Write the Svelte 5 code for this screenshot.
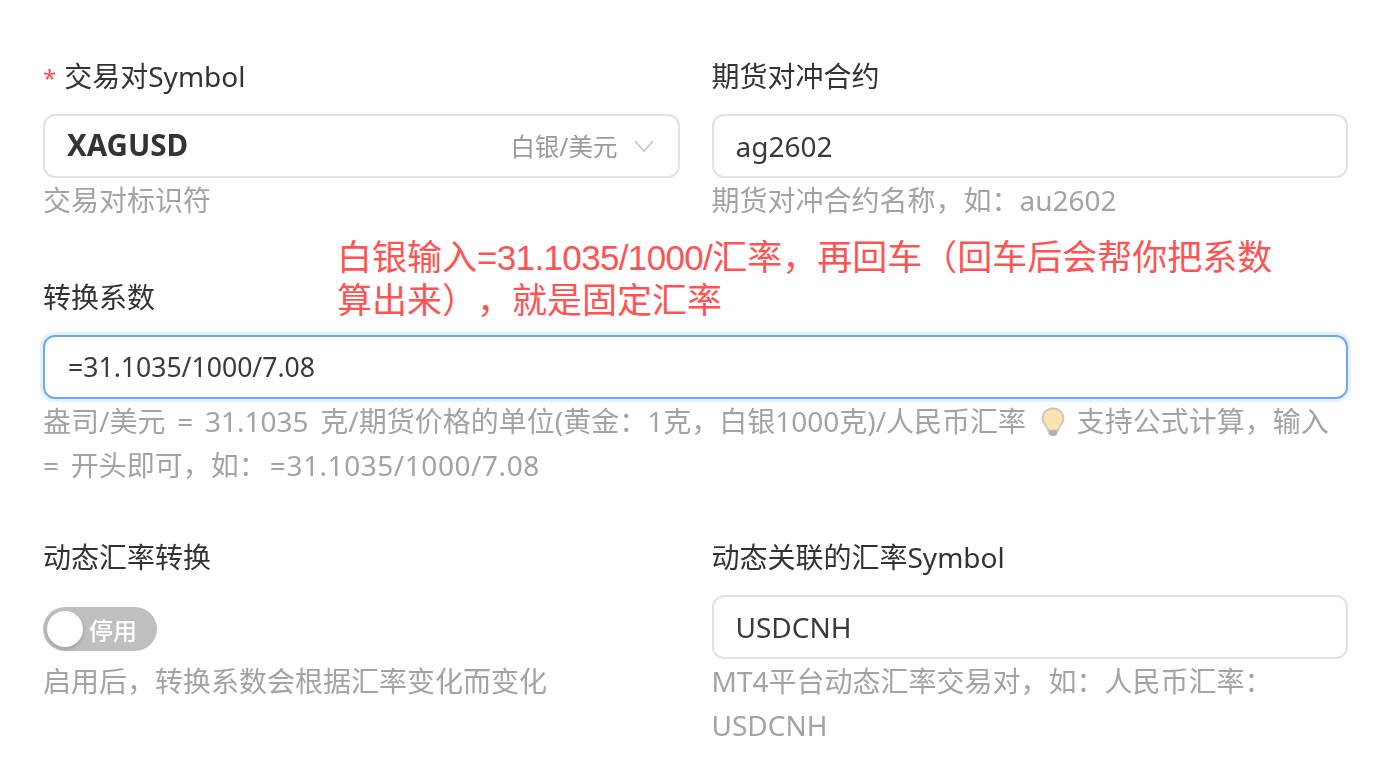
<script lang="ts">
  const formulaHelpA = "盎司/美元 = 31.1035 克/期货价格的单位(黄金：1克，白银1000克)/人民币汇率";
  const formulaHelpB = "支持公式计算，输入";
  const formulaHelpC = "= 开头即可，如：";
  const formulaExample = "=31.1035/1000/7.08";
</script>

<main>
  <div class="form">
    <section class="row first">
      <div class="field">
        <div class="label"><span class="req">*</span>交易对Symbol</div>
        <div class="control select">
          <b>XAGUSD</b>
          <span class="sub">白银/美元</span>
          <svg class="arrow" viewBox="0 0 20 12" width="20" height="12">
            <path d="M1 1l9 10 9-10" fill="none" stroke="#c4c4c4" stroke-width="1.6" />
          </svg>
        </div>
        <div class="help">交易对标识符</div>
      </div>
      <div class="field">
        <div class="label">期货对冲合约</div>
        <input class="control" value="ag2602" readonly />
        <div class="help">期货对冲合约名称，如：au2602</div>
      </div>
    </section>

    <section class="row second">
      <div class="field">
        <div class="label">转换系数</div>
        <input class="control focused" value="=31.1035/1000/7.08" readonly />
        <div class="help formula">
          {formulaHelpA}
          <svg class="bulb" viewBox="0 0 24 30" width="24" height="30">
            <path d="M12 1.500C6 1.500 1.500 6 1.500 11.500c0 3.800 2.300 5.800 3.900 8 1 1.300 1.500 2.500 1.700 3.800h9.800c.2-1.300.7-2.500 1.700-3.800 1.600-2.200 3.900-4.200 3.900-8C22.500 6 18 1.500 12 1.500z" fill="#ffe2ae" stroke="#c9c5bc" stroke-width="1.800" />
            <path d="M7.500 23.500h9v2.400c0 1.800-1.800 3-4.500 3s-4.500-1.200-4.500-3z" fill="#b0b0b0" />
          </svg>
          {formulaHelpB}<br />{formulaHelpC}<span class="example">{formulaExample}</span>
        </div>
      </div>
    </section>

    <section class="row">
      <div class="field">
        <div class="label">动态汇率转换</div>
        <div class="switch"><i></i><span>停用</span></div>
        <div class="help">启用后，转换系数会根据汇率变化而变化</div>
      </div>
      <div class="field">
        <div class="label">动态关联的汇率Symbol</div>
        <input class="control" value="USDCNH" readonly />
        <div class="help">MT4平台动态汇率交易对，如：人民币汇率：USDCNH</div>
      </div>
    </section>
  </div>

  <div class="note">白银输入<span class="expr">=31.1035/1000/</span>汇率，再回车（回车后会帮你把系数<br />算出来），就是固定汇率</div>
</main>

<style>
  :global(body) {
    margin: 0;
    background: #fff;
    font-family: "Noto Sans", "Noto Sans CJK SC", sans-serif;
  }

  main {
    position: relative;
    width: 1394px;
    height: 772px;
    overflow: hidden;
  }

  .form {
    padding: 54px 46px 0 43px;
    filter: blur(0.6px);
    text-spacing-trim: space-all;
  }

  .row {
    display: grid;
    grid-template-columns: 1fr 1fr;
    column-gap: 32px;
  }
  .row.first { margin-bottom: 53px; }
  .row.second { grid-template-columns: 1fr; margin-bottom: 48px; }

  .label {
    height: 44px;
    line-height: 44px;
    margin-bottom: 16px;
    font-size: 28px;
    color: #333;
  }
  .req {
    color: #ff4d4f;
    font-size: 24px;
    margin-right: 8px;
  }

  .control {
    display: block;
    box-sizing: border-box;
    width: 100%;
    height: 64px;
    padding: 0 22px;
    border: 2px solid #e2e2e2;
    border-radius: 12px;
    background: #fff;
    outline: none;
    font-family: inherit;
    font-size: 28px;
    color: #3a3a3a;
  }
  .control.focused {
    border-color: #69a8ff;
    box-shadow: 0 0 0 3px #e6f1ff;
    padding-left: 23px;
    font-size: 26.6px;
  }

  .select {
    display: flex;
    align-items: center;
  }
  .select b {
    flex: 1;
    margin-bottom: 4px;
    font-size: 29.5px;
    color: #333;
  }
  .sub {
    margin-bottom: 2px;
    font-size: 24.5px;
    color: #9a9a9a;
  }
  .arrow { margin-left: 16px; margin-right: 2px; }

  .help {
    line-height: 44px;
    font-size: 28px;
    color: #a3a3a3;
  }
  .formula { word-spacing: 4.5px; }
  .example { margin-left: 3px; letter-spacing: 0.55px; }
  .bulb { vertical-align: -5px; margin-left: 3px; }

  .switch {
    display: flex;
    align-items: center;
    box-sizing: border-box;
    width: 114px;
    height: 44px;
    margin: 28px 0 8px;
    padding: 4px;
    border-radius: 22px;
    background: #bfbfbf;
  }
  .switch i {
    width: 36px;
    height: 36px;
    border-radius: 50%;
    background: #fff;
    box-shadow: 0 2px 4px rgba(0, 35, 11, 0.2);
  }
  .switch span {
    margin-left: 6px;
    font-size: 24px;
    font-weight: 500;
    color: #fff;
  }

  .note {
    position: absolute;
    left: 337px;
    top: 233px;
    font-family: "Noto Sans CJK SC", sans-serif;
    font-size: 35px;
    line-height: 43px;
    color: #ff5252;
    white-space: nowrap;
    text-spacing-trim: space-all;
  }
  .expr {
    font-family: "Liberation Sans", sans-serif;
    letter-spacing: -0.65px;
    line-height: 1;
  }
</style>
